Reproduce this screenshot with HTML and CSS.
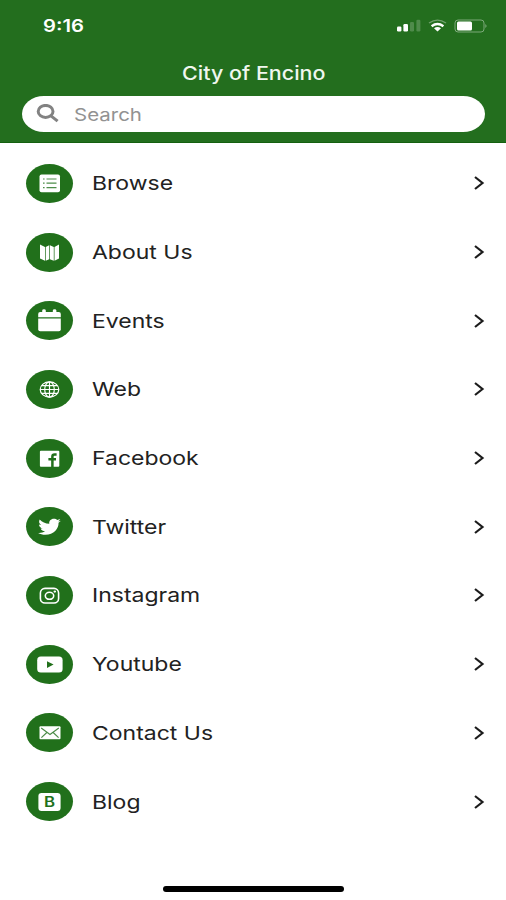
FILE: index.html
```html
<!DOCTYPE html>
<html lang="en">
<head>
    <meta charset="UTF-8">
    <meta name="viewport" content="width=device-width, initial-scale=1.0">
    <title>City of Encino</title>
    <link rel="stylesheet" href="styles.css">
</head>
<body>
    <header class="header">
        <div class="status-bar">
            <span class="time">9:16</span>
            <svg class="status-icons" width="92" height="14" viewBox="0 0 92 14">
                <g fill="#fff">
                    <rect x="1" y="7.5" width="4.4" height="5" rx="1.2"/>
                    <rect x="7.4" y="5" width="4.6" height="7.5" rx="1.2"/>
                    <rect x="14" y="3" width="4" height="9.5" rx="1.2" opacity=".2"/>
                    <rect x="20.4" y="0.8" width="4" height="11.7" rx="1.2" opacity=".2"/>
                    <path d="M38 9.2 Q41.5 7 45 9.2 L41.5 12.6 Z"/>
                    <rect x="61" y="2.5" width="15" height="9" rx="1.5"/>
                    <path d="M89.3 5 q2.6 2 0 4z" opacity=".4"/>
                </g>
                <g fill="none" stroke="#fff">
                    <path d="M35.6 7.2 Q41.5 2.8 47.4 7.2" stroke-width="2.4"/>
                    <path d="M33 4 Q41.5 -1.8 50 4" stroke-width="1.4" opacity=".35"/>
                    <rect x="59" y="1" width="29" height="12" rx="3" opacity=".4"/>
                </g>
            </svg>
        </div>
        <h1 class="title"><span>City of Encino</span></h1>
        <div class="search">
            <svg class="search-icon" width="24" height="20" viewBox="0 0 24 20">
                <ellipse cx="9.6" cy="7.4" rx="7.4" ry="6"/>
                <path d="M15 11.8 L21.6 17.2"/>
            </svg>
            <span class="placeholder">Search</span>
        </div>
    </header>

    <ul class="menu">
        <li class="item">
            <svg class="icon" viewBox="0 0 47 39">
                <rect x="13.5" y="10.6" width="20.5" height="17.6" rx="2"/>
                <path class="cut faint" d="M20.5 15 H30.5 M20.5 19.2 H30.5 M20.5 23.6 H30.5 M17 15 h1.6 M17 19.2 h1.6 M17 23.6 h1.6"/>
            </svg>
            <span class="label">Browse</span>
            <svg class="chevron" viewBox="0 0 12 16"><path d="M2 2 L9.5 8 L2 14"/></svg>
        </li>
        <li class="item">
            <svg class="icon" viewBox="0 0 47 39">
                <path d="M14 11.5 L19 14 V27.8 L14 25.4 Z M19.7 14 L23.2 12.3 V26.3 L19.7 27.8 Z M23.9 12.3 L27.8 14 V27.8 L23.9 26.3 Z M28.5 14 L33 11.5 V25.4 L28.5 27.8 Z"/>
            </svg>
            <span class="label">About Us</span>
            <svg class="chevron" viewBox="0 0 12 16"><path d="M2 2 L9.5 8 L2 14"/></svg>
        </li>
        <li class="item">
            <svg class="icon" viewBox="0 0 47 39">
                <path d="M12.2 16.2 V13 Q12.2 11 14.2 11 H16.2 V9.4 Q16.2 8.2 18 8.2 T19.8 9.4 V11 H26.8 V9.4 Q26.8 8.2 28.6 8.2 T30.4 9.4 V11 H32.8 Q34.8 11 34.8 13 V16.2 Z"/>
                <path d="M12.2 17.4 H34.8 V28.2 Q34.8 30.2 32.8 30.2 H14.2 Q12.2 30.2 12.2 28.2 Z"/>
            </svg>
            <span class="label">Events</span>
            <svg class="chevron" viewBox="0 0 12 16"><path d="M2 2 L9.5 8 L2 14"/></svg>
        </li>
        <li class="item">
            <svg class="icon" viewBox="0 0 47 39">
                <g class="line">
                    <ellipse cx="23.5" cy="19.5" rx="9.3" ry="7.6"/>
                    <ellipse cx="23.5" cy="19.5" rx="4.8" ry="7.6"/>
                    <path d="M23.5 12 V27 M14.2 19.5 H32.8 M15.8 15.6 H31.2 M15.8 23.4 H31.2"/>
                </g>
            </svg>
            <span class="label">Web</span>
            <svg class="chevron" viewBox="0 0 12 16"><path d="M2 2 L9.5 8 L2 14"/></svg>
        </li>
        <li class="item">
            <svg class="icon" viewBox="0 0 47 39">
                <rect x="13.9" y="11.8" width="19.4" height="16" rx="1"/>
                <path class="cut thick" d="M30.6 15.6 H28.6 Q26.4 15.6 26.4 17.6 V28 M22.4 20.2 H30"/>
            </svg>
            <span class="label">Facebook</span>
            <svg class="chevron" viewBox="0 0 12 16"><path d="M2 2 L9.5 8 L2 14"/></svg>
        </li>
        <li class="item">
            <svg class="icon" viewBox="0 0 47 39">
                <path transform="translate(12.4 9.6) scale(.95 .83)" d="M23.6 4.9c-.9.4-1.8.7-2.8.8 1-.6 1.8-1.6 2.2-2.7-1 .6-2 1-3.1 1.2-.9-1-2.2-1.6-3.6-1.6-3.2 0-5.5 3-4.8 6C7.4 8.4 3.8 6.4 1.4 3.4c-1.3 2.2-.7 5.1 1.5 6.6-.8 0-1.6-.2-2.2-.6-.1 2.3 1.6 4.4 3.9 4.9-.7.2-1.5.2-2.2.1.6 2 2.4 3.4 4.6 3.4-2.1 1.6-4.7 2.3-7.3 2 2.2 1.4 4.8 2.2 7.5 2.2 9.1 0 14.3-7.7 14-14.6 1-.7 1.8-1.6 2.4-2.5z"/>
            </svg>
            <span class="label">Twitter</span>
            <svg class="chevron" viewBox="0 0 12 16"><path d="M2 2 L9.5 8 L2 14"/></svg>
        </li>
        <li class="item">
            <svg class="icon" viewBox="0 0 47 39">
                <g class="line insta">
                    <rect x="14.4" y="12.4" width="18.2" height="14.6" rx="4.6"/>
                    <ellipse cx="23.5" cy="19.8" rx="4.2" ry="3.5"/>
                </g>
                <ellipse cx="28.8" cy="15.6" rx="1.3" ry="1.1"/>
            </svg>
            <span class="label">Instagram</span>
            <svg class="chevron" viewBox="0 0 12 16"><path d="M2 2 L9.5 8 L2 14"/></svg>
        </li>
        <li class="item">
            <svg class="icon" viewBox="0 0 47 39">
                <rect x="11.2" y="11.6" width="25.4" height="16" rx="3.6"/>
                <path class="hole" d="M21 16.2 L27.6 19.6 L21 23 Z"/>
            </svg>
            <span class="label">Youtube</span>
            <svg class="chevron" viewBox="0 0 12 16"><path d="M2 2 L9.5 8 L2 14"/></svg>
        </li>
        <li class="item">
            <svg class="icon" viewBox="0 0 47 39">
                <rect x="13.5" y="13.2" width="21" height="13.1" rx="1"/>
                <path class="cut faint" d="M15.2 15 L24 21.6 L32.8 15 M15.4 24.6 L20.6 19.8 M32.6 24.6 L27.4 19.8"/>
            </svg>
            <span class="label">Contact Us</span>
            <svg class="chevron" viewBox="0 0 12 16"><path d="M2 2 L9.5 8 L2 14"/></svg>
        </li>
        <li class="item">
            <svg class="icon" viewBox="0 0 47 39">
                <rect x="12.4" y="10.9" width="22.2" height="18" rx="3.2"/>
                <text class="hole letter" transform="translate(23.6 24.8) scale(1.2 1)">B</text>
            </svg>
            <span class="label">Blog</span>
            <svg class="chevron" viewBox="0 0 12 16"><path d="M2 2 L9.5 8 L2 14"/></svg>
        </li>
    </ul>

    <div class="home-bar"></div>
</body>
</html>
```

FILE: styles.css
```css
* {
    box-sizing: border-box;
}
body {
    margin: 0;
    height: 900px;
    display: flex;
    flex-direction: column;
    align-items: center;
    overflow: hidden;
    background-color: #fff;
    font-family: Inter, 'Liberation Sans', sans-serif;
}
.header {
    width: 100%;
    height: 143px;
    padding: 0 21px 0 22px;
    background-color: #236e1e;
    border-bottom: 1px solid #14600f;
}
.status-bar {
    height: 52px;
    padding-left: 21px;
    display: flex;
    align-items: center;
    justify-content: space-between;
}
.time {
    color: #fff;
    font-size: 17px;
    font-weight: 600;
    transform: scaleX(1.19);
    transform-origin: left;
}
.status-icons {
    margin-right: -3px;
}
.title {
    margin: 0;
    height: 44px;
    line-height: 42px;
    text-align: center;
    color: #f0f7ef;
    font-size: 18.5px;
    font-weight: 500;
}
.title span {
    display: inline-block;
    transform: scaleX(1.16);
}
.search {
    height: 36px;
    padding-left: 14px;
    display: flex;
    align-items: center;
    background-color: #fff;
    border-radius: 22px / 18px;
}
.search-icon {
    fill: none;
    stroke: #828282;
    stroke-width: 3;
}
.placeholder {
    margin-left: 14px;
    color: #929292;
    font-size: 17.5px;
    transform: scaleX(1.17);
    transform-origin: left;
}
.menu {
    width: 100%;
    margin: 0;
    padding: 6px 21.5px 0 25.5px;
    list-style: none;
}
.item {
    height: 68.7px;
    display: flex;
    align-items: center;
}
.icon {
    width: 47px;
    height: 39px;
    background-color: #21701b;
    border-radius: 50%;
    fill: #fff;
}
.cut {
    fill: none;
    stroke: #21701b;
    stroke-width: 1.2;
}
.faint {
    opacity: 0.8;
}
.thick {
    stroke-width: 2.5;
}
.hole {
    fill: #21701b;
}
.line {
    fill: none;
    stroke: #fff;
    stroke-width: 1.2;
}
.insta {
    stroke-width: 1.6;
}
.letter {
    font-size: 14px;
    font-weight: 600;
    text-anchor: middle;
}
.label {
    margin-left: 19.5px;
    padding-top: 1px;
    color: #222;
    font-size: 19px;
    transform: scaleX(1.21);
    transform-origin: left;
}
.chevron {
    width: 12px;
    height: 16px;
    margin-left: auto;
    fill: none;
    stroke: #1c1c1c;
    stroke-width: 2.2;
}
.home-bar {
    width: 181px;
    height: 6px;
    margin-top: 50px;
    background-color: #000;
    border-radius: 3px;
}
```
